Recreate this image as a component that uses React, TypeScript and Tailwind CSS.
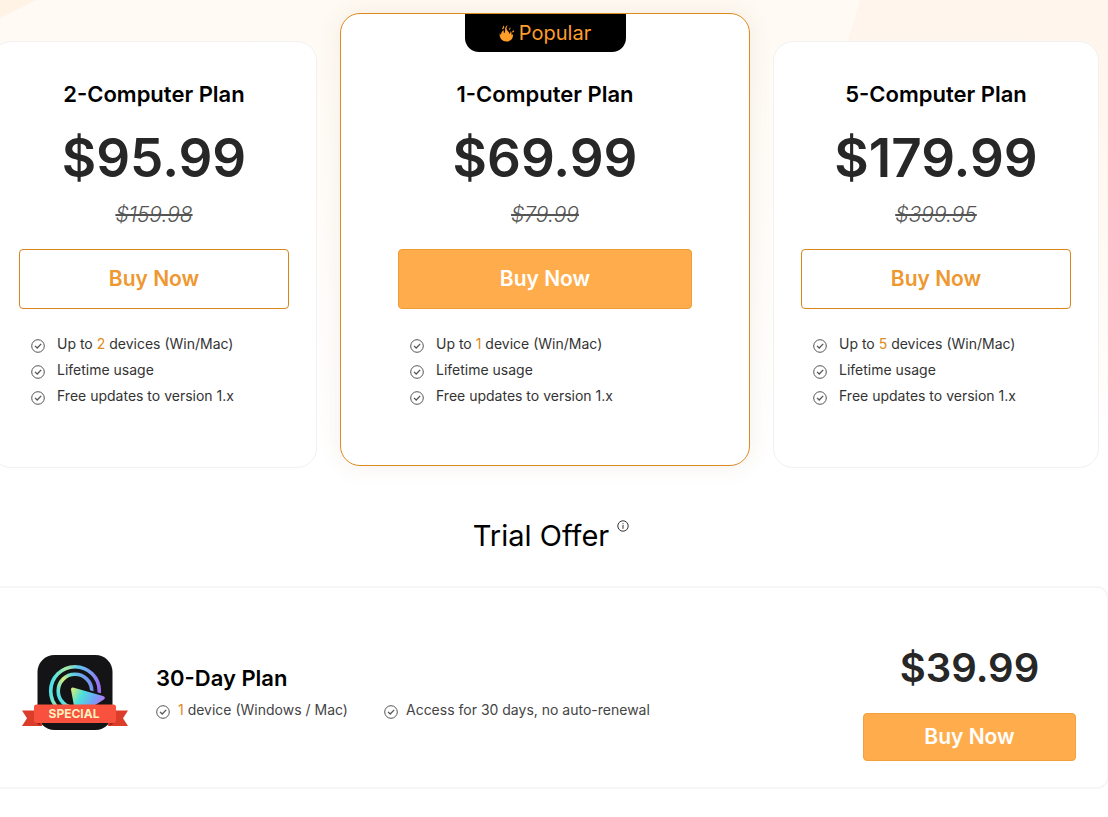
import React from 'react';

type Plan = {
  name: string;
  price: string;
  oldPrice: string;
  count: string;
  unit: string;
  popular?: boolean;
};

const plans: Plan[] = [
  { name: '2-Computer Plan', price: '$95.99', oldPrice: '$159.98', count: '2', unit: 'devices' },
  { name: '1-Computer Plan', price: '$69.99', oldPrice: '$79.99', count: '1', unit: 'device', popular: true },
  { name: '5-Computer Plan', price: '$179.99', oldPrice: '$399.95', count: '5', unit: 'devices' },
];

function CheckIcon() {
  return (
    <svg viewBox="0 0 14 14" className="mt-[3px] h-[14px] w-[14px] shrink-0" fill="none" stroke="#555" aria-hidden="true">
      <circle cx="7" cy="7" r="6.3" strokeWidth="1" />
      <path d="M4 6.900 6.200 9l4-4.100" strokeWidth="1.3" />
    </svg>
  );
}

function FlameIcon() {
  return (
    <svg viewBox="0 0 16 18" className="h-[18px] w-4" fill="#ff9d2b" aria-hidden="true">
      <path d="M8.800 1C7 2 5.800 3.700 6.100 6.200c.1 1.300-.2 2.300-1 3.100C4.600 8.400 4.600 7.300 4.900 6.100 2.800 7.200 1.900 9.200 2.100 11 1.400 10.600 1 9.900.8 9.100.1 13.600 2.800 17.500 7.500 17.500c4.600 0 7-3.500 6.500-7.600-.4.700-.8 1.100-1.500 1.400.4-1.800.1-3.100-1-4.300.1 1.200-.2 2.200-1 2.900C10.200 7.500 7.200 6.500 7.500 4.200 7.600 2.900 8.100 2 8.800 1z" />
      <path d="M4.300 1.300C4.800 2.500 3.700 3.300 3.300 4.300c-.2.500 0 1 .2 1.300C5.600 4.500 5.800 2.600 4.300 1.300z" />
      <path d="M11.300 3.200c-1.200.8-1.400 2-.6 3 .6-.9.9-1.900.6-3zM15.200 6.600c-1.300-.2-2.100.5-2 1.800 1.100.2 1.900-.6 2-1.800z" />
    </svg>
  );
}

function InfoIcon() {
  return (
    <svg viewBox="0 0 12 12" className="mt-1 h-3 w-3" fill="none" stroke="#333" aria-hidden="true">
      <circle cx="6" cy="6" r="5.2" strokeWidth="1" />
      <path d="M6 3.200v1M6 5v3.800" strokeWidth="1" />
    </svg>
  );
}

function ProductLogo() {
  return (
    <svg viewBox="0 0 106 75" className="h-[75px] w-[106px] shrink-0" role="img" aria-label="Special">
      <defs>
        <linearGradient id="ring" x1="0" y1=".3" x2="1" y2=".5">
          <stop offset="0" stopColor="#45e0f0" />
          <stop offset=".25" stopColor="#a8eca0" />
          <stop offset=".5" stopColor="#5fc8f4" />
          <stop offset="1" stopColor="#9a6cf2" />
        </linearGradient>
        <linearGradient id="innerRing" x1="0" y1=".7" x2="1" y2=".2">
          <stop offset="0" stopColor="#42dff2" />
          <stop offset=".35" stopColor="#d7ee7c" />
          <stop offset=".6" stopColor="#5cd9e0" />
          <stop offset="1" stopColor="#7c80f4" />
        </linearGradient>
        <linearGradient id="play" x1="0" y1="0" x2="1" y2=".5">
          <stop offset="0" stopColor="#e6f06b" />
          <stop offset=".35" stopColor="#4de0da" />
          <stop offset=".7" stopColor="#70a4f5" />
          <stop offset="1" stopColor="#c06cf4" />
        </linearGradient>
      </defs>
      <rect x="15.500" y="0" width="75" height="75" rx="17" fill="#141416" />
      <circle cx="53" cy="36" r="24.300" fill="none" stroke="url(#ring)" strokeWidth="3.600" />
      <circle cx="53" cy="36" r="16.800" fill="none" stroke="url(#innerRing)" strokeWidth="3.600" />
      <path d="M48 31.500 81 40.500Q85 42.300 82 44.500L54 63Z" fill="#141416" stroke="#141416" strokeWidth="3" />
      <path d="M51 32.500 81 41Q84.500 42.700 81.500 44.800L54 62 49 34.500Q49 32.200 51 32.500Z" fill="url(#play)" />
      <path d="M0 55.500h20v15.500H0l5-7.750zM106 55.500H86v15.500h20l-5-7.750z" fill="#dc3d2b" />
      <path d="M12 66.500 18.500 71V66zM94 66.500 87.500 71V66z" fill="#9e2418" />
      <rect x="12" y="49.500" width="82" height="18.500" rx="2.500" fill="#f8513d" />
      <text x="52" y="63" textAnchor="middle" fill="#fff0bf" className="font-['Inter',sans-serif] text-[12px] font-bold">SPECIAL</text>
    </svg>
  );
}

function PlanCard({ plan }: { plan: Plan }) {
  const shell = plan.popular
    ? 'rounded-[20px] border border-[#dd8a20] px-[57px] pb-14 shadow-[0_0_24px_rgba(120,90,40,0.09)]'
    : 'mt-7 rounded-[20px] border border-[#f1f1f1] px-[27px] pt-9 pb-[58px]';
  const button = plan.popular
    ? 'border-[#f09c35] bg-[#ffad4c] text-white'
    : 'border-[#d8851c] bg-white text-[#ee982f]';
  return (
    <article className={`self-start bg-white text-center ${shell}`}>
      {plan.popular && (
        <div className="mx-auto mb-[26px] flex h-[38px] w-[161px] items-center justify-center gap-1 rounded-b-[14px] bg-black text-[20px] text-[#ff9d2b]">
          <FlameIcon />
          Popular
        </div>
      )}
      <h2 className="text-[22px] leading-8 font-semibold text-black">{plan.name}</h2>
      <p className="mt-3 text-[53px] leading-[72px] font-semibold text-[#272727]">{plan.price}</p>
      <p className="mt-[9px] text-[21px] leading-6 font-light text-[#555] italic">
        <s>{plan.oldPrice}</s>
      </p>
      <button type="button" className={`mt-[22px] h-[60px] w-full rounded border text-[21px] font-semibold ${button}`}>
        Buy Now
      </button>
      <ul className="mt-[22px] pl-3 text-left text-[14px] leading-[26px] text-[#333]">
        <li className="flex items-center gap-3">
          <CheckIcon />
          <span>
            Up to <span className="text-[#e08a22]">{plan.count}</span> {plan.unit} (Win/Mac)
          </span>
        </li>
        <li className="flex items-center gap-3">
          <CheckIcon />
          Lifetime usage
        </li>
        <li className="flex items-center gap-3">
          <CheckIcon />
          Free updates to version 1.x
        </li>
      </ul>
    </article>
  );
}

export default function App() {
  return (
    <div className="relative isolate min-h-screen overflow-hidden bg-white font-['Inter',sans-serif]">
      <div className="absolute inset-x-0 top-0 -z-10 h-[460px] bg-linear-to-b from-[#fffaf3] via-[#fffcf9] to-white" />
      <svg className="absolute inset-x-0 top-0 -z-10 h-[460px] w-full" viewBox="0 0 1108 460" preserveAspectRatio="none" aria-hidden="true">
        <defs>
          <linearGradient id="glow" x1="0" y1="0" x2="0" y2="1">
            <stop offset="0" stopColor="#fff5ec" />
            <stop offset="1" stopColor="#fff5ec" stopOpacity="0" />
          </linearGradient>
        </defs>
        <path d="M0 0H36L0 18Z" fill="#fff3e6" />
        <path d="M860 0H1108V460H770L842 60Z" fill="url(#glow)" />
      </svg>
      <main className="mr-[9px] -ml-[9px] pt-[13px]">
        <section className="grid grid-cols-[326fr_410fr_326fr] gap-[23px]" aria-label="Plans">
          {plans.map((plan) => (
            <PlanCard key={plan.name} plan={plan} />
          ))}
        </section>
        <h2 className="mt-12 flex items-start justify-center gap-2 pl-3 text-[29px] leading-10 text-black">
          Trial Offer
          <InfoIcon />
        </h2>
        <section className="-mx-[10px] mt-[30px] flex items-center rounded-[12px] border-2 border-[#f6f6f6] bg-white pt-[52px] pr-[31px] pb-[26px] pl-[39px]" aria-label="Trial plan">
          <div className="flex items-center gap-7 pb-4">
            <ProductLogo />
            <div>
              <h3 className="text-[22px] leading-8 font-semibold text-black">30-Day Plan</h3>
              <ul className="mt-[3px] flex gap-[36px] text-[14px] leading-[26px] text-[#444]">
                <li className="flex items-center gap-2">
                  <CheckIcon />
                  <span>
                    <span className="text-[#e08a22]">1</span> device (Windows / Mac)
                  </span>
                </li>
                <li className="flex items-center gap-2">
                  <CheckIcon />
                  Access for 30 days, no auto-renewal
                </li>
              </ul>
            </div>
          </div>
          <div className="ml-auto w-[213px] text-center">
            <p className="text-[40px] leading-[56px] font-semibold text-[#272727]">$39.99</p>
            <button type="button" className="mt-[17px] h-12 w-full rounded border border-[#f3a03d] bg-[#ffad4c] text-[21px] font-semibold text-white">
              Buy Now
            </button>
          </div>
        </section>
      </main>
    </div>
  );
}
